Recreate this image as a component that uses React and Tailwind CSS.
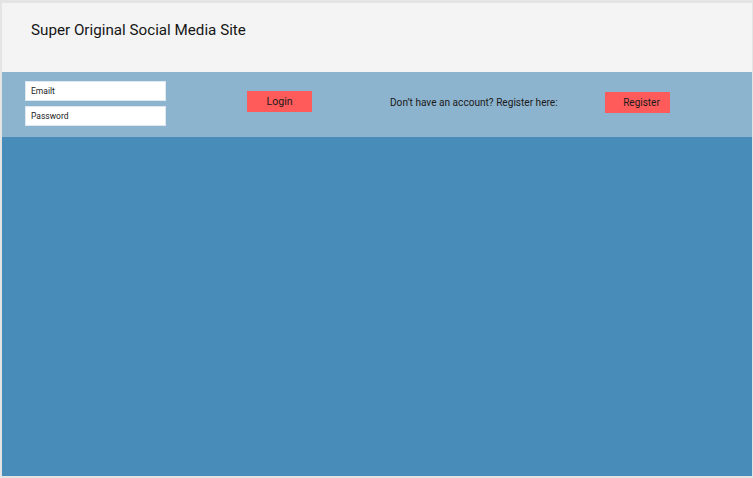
export default function App() {
  return (
    <div
      className="flex h-[478px] w-[753px] flex-col border-t-[3px] border-r border-b-2 border-l-2 border-[#e4e4e4] bg-[#488dba]"
      style={{ fontFamily: "Roboto, 'Liberation Sans', sans-serif" }}
    >
      {/* Header */}
      <div className="h-[69px] shrink-0 bg-[#f4f4f4] pt-[17px] pl-[29px]">
        <h1 className="text-[15.2px] leading-[20px] text-[#161616]">Super Original Social Media Site</h1>
      </div>

      {/* Login bar */}
      <div className="flex h-[65px] shrink-0 items-start bg-[#8db4ce]">
        <div className="mt-[9px] ml-[23px] flex w-[141px] flex-col gap-[5px]">
          <input
            type="text"
            placeholder="Emailt"
            className="h-[20px] w-full border border-[#dde8f0] bg-white px-[5px] text-[8.5px] text-[#1a1a1a] outline-none placeholder:text-[#1a1a1a]"
          />
          <input
            type="password"
            placeholder="Password"
            className="h-[20px] w-full border border-[#dde8f0] bg-white px-[5px] text-[8.5px] text-[#1a1a1a] outline-none placeholder:text-[#1a1a1a]"
          />
        </div>

        <button className="mt-[19px] ml-[81px] h-[21px] w-[65px] bg-[#ff5b5b] text-[10.6px] text-[#1a1a1a]">
          Login
        </button>

        <p className="mt-[24px] ml-[78px] w-[215px] text-[10.1px] leading-[13px] text-[#1a1a1a]">
          Don’t have an account? Register here:
        </p>

        <button className="mt-[20px] h-[21px] w-[65px] bg-[#ff5b5b] pl-[8px] text-[10px] text-[#1a1a1a]">
          Register
        </button>
      </div>

      {/* Content */}
      <div className="flex-1" />
    </div>
  );
}
